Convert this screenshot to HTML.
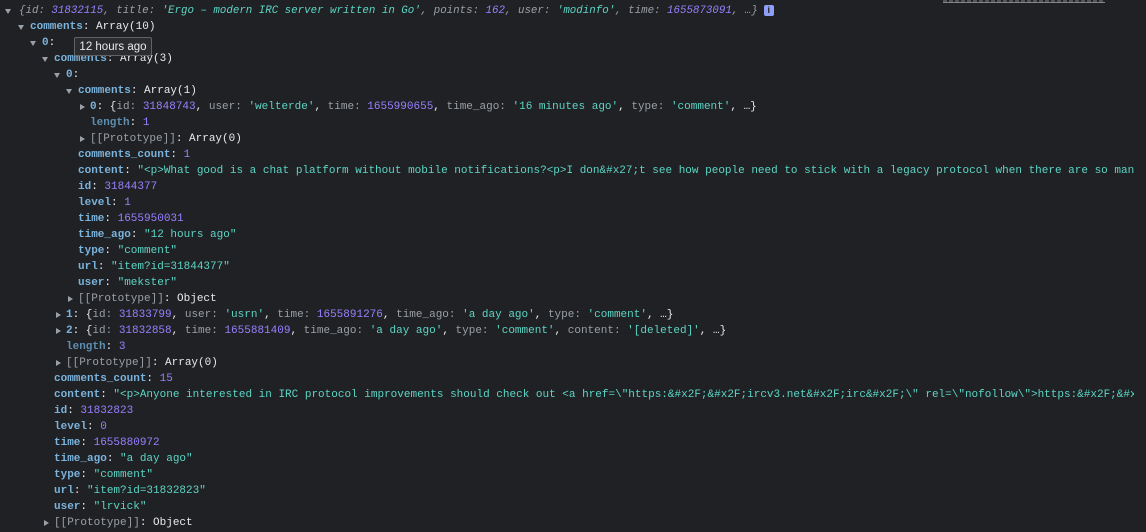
<!DOCTYPE html>
<html><head><meta charset="utf-8"><style>
html,body{margin:0;padding:0;background:#202124;width:1146px;height:532px;overflow:hidden}
body{font-family:"Liberation Mono","DejaVu Sans Mono",monospace;font-size:11px;color:#e8eaed;position:relative}
.r{position:absolute;height:16px;line-height:16px;white-space:pre;right:12px;overflow:hidden}
.top{font-size:10.8px}
.t{position:absolute;width:0;height:0}
.d{border-left:3.5px solid transparent;border-right:3.5px solid transparent;border-top:5px solid #9aa0a6;margin-top:6px}
.rt{border-top:3.5px solid transparent;border-bottom:3.5px solid transparent;border-left:5px solid #9aa0a6;margin-top:4.5px}
.k{color:#7ab3dc;font-weight:bold}
.dk{color:#5e8eb0;font-weight:bold}
.g{color:#9aa0a6}
.n{color:#9980ff}
.s{color:#5cd5c5}
.i{font-style:italic}
.tip{position:absolute;left:74px;top:37px;width:78px;height:19px;background:#2b2c2f;border:1px solid #5f6368;border-radius:2px;color:#e8eaed;font-family:"Liberation Sans",sans-serif;font-size:11.5px;line-height:19px;text-align:center;box-sizing:border-box}
.info{display:inline-block;width:10px;height:11px;background:#8f9ff8;border-radius:2px;color:#202124;font-size:9px;line-height:11px;text-align:center;vertical-align:middle;font-family:"Liberation Sans",sans-serif;font-weight:bold;margin-left:6px}
</style></head><body>
<div style="position:absolute;left:943px;top:0;width:162px;height:2px;border-bottom:1px solid #80868b;background:repeating-linear-gradient(90deg,#555 0 4px,transparent 4px 6px)"></div>

<div class="t d" style="left:5px;top:3px"></div>
<div class="r top" style="left:19px;top:3px"><span class="i"><span class="g">{id: </span><span class="n">31832115</span><span class="g">, title: </span><span class="s">'Ergo – modern IRC server written in Go'</span><span class="g">, points: </span><span class="n">162</span><span class="g">, user: </span><span class="s">'modinfo'</span><span class="g">, time: </span><span class="n">1655873091</span><span class="g">, …}</span></span><span class="info">i</span></div>

<div class="t d" style="left:18px;top:19px"></div>
<div class="r" style="left:30px;top:19px"><span class="k">comments</span>: Array(10)</div>

<div class="t d" style="left:30px;top:35px"></div>
<div class="r" style="left:42px;top:35px"><span class="k">0</span>:</div>

<div class="t d" style="left:42px;top:51px"></div>
<div class="r" style="left:54px;top:51px"><span class="k">comments</span>: Array(3)</div>

<div class="t d" style="left:54px;top:67px"></div>
<div class="r" style="left:66px;top:67px"><span class="k">0</span>:</div>

<div class="t d" style="left:66px;top:83px"></div>
<div class="r" style="left:78px;top:83px"><span class="k">comments</span>: Array(1)</div>

<div class="t rt" style="left:80px;top:99px"></div>
<div class="r" style="left:90px;top:99px"><span class="k">0</span>: {<span class="g">id: </span><span class="n">31848743</span>, <span class="g">user: </span><span class="s">'welterde'</span>, <span class="g">time: </span><span class="n">1655990655</span>, <span class="g">time_ago: </span><span class="s">'16 minutes ago'</span>, <span class="g">type: </span><span class="s">'comment'</span>, …}</div>

<div class="r" style="left:90px;top:115px"><span class="dk">length</span>: <span class="n">1</span></div>
<div class="t rt" style="left:80px;top:131px"></div>
<div class="r" style="left:90px;top:131px"><span class="g">[[Prototype]]</span>: Array(0)</div>

<div class="r" style="left:78px;top:147px"><span class="k">comments_count</span>: <span class="n">1</span></div>
<div class="r" style="left:78px;top:163px"><span class="k">content</span>: <span class="s">"&lt;p&gt;What good is a chat platform without mobile notifications?&lt;p&gt;I don&amp;#x27;t see how people need to stick with a legacy protocol when there are so many</span></div>
<div class="r" style="left:78px;top:179px"><span class="k">id</span>: <span class="n">31844377</span></div>
<div class="r" style="left:78px;top:195px"><span class="k">level</span>: <span class="n">1</span></div>
<div class="r" style="left:78px;top:211px"><span class="k">time</span>: <span class="n">1655950031</span></div>
<div class="r" style="left:78px;top:227px"><span class="k">time_ago</span>: <span class="s">"12 hours ago"</span></div>
<div class="r" style="left:78px;top:243px"><span class="k">type</span>: <span class="s">"comment"</span></div>
<div class="r" style="left:78px;top:259px"><span class="k">url</span>: <span class="s">"item?id=31844377"</span></div>
<div class="r" style="left:78px;top:275px"><span class="k">user</span>: <span class="s">"mekster"</span></div>
<div class="t rt" style="left:68px;top:291px"></div>
<div class="r" style="left:78px;top:291px"><span class="g">[[Prototype]]</span>: Object</div>

<div class="t rt" style="left:56px;top:307px"></div>
<div class="r" style="left:66px;top:307px"><span class="k">1</span>: {<span class="g">id: </span><span class="n">31833799</span>, <span class="g">user: </span><span class="s">'usrn'</span>, <span class="g">time: </span><span class="n">1655891276</span>, <span class="g">time_ago: </span><span class="s">'a day ago'</span>, <span class="g">type: </span><span class="s">'comment'</span>, …}</div>
<div class="t rt" style="left:56px;top:323px"></div>
<div class="r" style="left:66px;top:323px"><span class="k">2</span>: {<span class="g">id: </span><span class="n">31832858</span>, <span class="g">time: </span><span class="n">1655881409</span>, <span class="g">time_ago: </span><span class="s">'a day ago'</span>, <span class="g">type: </span><span class="s">'comment'</span>, <span class="g">content: </span><span class="s">'[deleted]'</span>, …}</div>
<div class="r" style="left:66px;top:339px"><span class="dk">length</span>: <span class="n">3</span></div>
<div class="t rt" style="left:56px;top:355px"></div>
<div class="r" style="left:66px;top:355px"><span class="g">[[Prototype]]</span>: Array(0)</div>

<div class="r" style="left:54px;top:371px"><span class="k">comments_count</span>: <span class="n">15</span></div>
<div class="r" style="left:54px;top:387px"><span class="k">content</span>: <span class="s">"&lt;p&gt;Anyone interested in IRC protocol improvements should check out &lt;a href=\"https:&amp;#x2F;&amp;#x2F;ircv3.net&amp;#x2F;irc&amp;#x2F;\" rel=\"nofollow\"&gt;https:&amp;#x2F;&amp;#x2F;ircv3</span></div>
<div class="r" style="left:54px;top:403px"><span class="k">id</span>: <span class="n">31832823</span></div>
<div class="r" style="left:54px;top:419px"><span class="k">level</span>: <span class="n">0</span></div>
<div class="r" style="left:54px;top:435px"><span class="k">time</span>: <span class="n">1655880972</span></div>
<div class="r" style="left:54px;top:451px"><span class="k">time_ago</span>: <span class="s">"a day ago"</span></div>
<div class="r" style="left:54px;top:467px"><span class="k">type</span>: <span class="s">"comment"</span></div>
<div class="r" style="left:54px;top:483px"><span class="k">url</span>: <span class="s">"item?id=31832823"</span></div>
<div class="r" style="left:54px;top:499px"><span class="k">user</span>: <span class="s">"lrvick"</span></div>
<div class="t rt" style="left:44px;top:515px"></div>
<div class="r" style="left:54px;top:515px"><span class="g">[[Prototype]]</span>: Object</div>

<div class="tip">12 hours ago</div>
</body></html>
